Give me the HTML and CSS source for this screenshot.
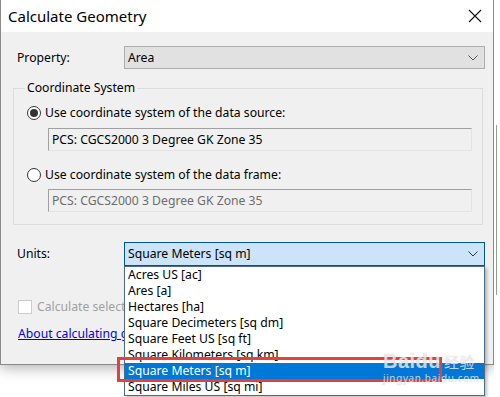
FILE: index.html
```html
<!DOCTYPE html>
<html lang="en">
<head>
  <meta charset="UTF-8">
  <title>Calculate Geometry</title>
  <link rel="stylesheet" href="styles.css">
</head>
<body>
  <div class="screen">
    <div class="dialog">
      <!-- barra de titulo -->
      <div class="titlebar">
        <span class="title">Calculate Geometry</span>
        <svg class="close" width="14" height="14" viewBox="0 0 14 14">
          <path d="M1 1 L13 13 M13 1 L1 13" stroke="#111" stroke-width="1.1" fill="none"/>
        </svg>
      </div>

      <div class="dialog-body">
        <div class="row prop-row">
          <label class="row-label">Property:</label>
          <div class="combo">
            <span>Area</span>
            <svg class="chevron" width="10" height="6" viewBox="0 0 10 6">
              <path d="M0.5 0.5 L5 5 L9.5 0.5" stroke="#555" stroke-width="1" fill="none"/>
            </svg>
          </div>
        </div>

        <fieldset class="group">
          <legend>Coordinate System</legend>
          <div class="radio-row">
            <span class="radio checked"></span>
            <span>Use coordinate system of the data source:</span>
          </div>
          <div class="textbox">PCS: CGCS2000 3 Degree GK Zone 35</div>
          <div class="radio-row second">
            <span class="radio"></span>
            <span>Use coordinate system of the data frame:</span>
          </div>
          <div class="textbox disabled">PCS: CGCS2000 3 Degree GK Zone 35</div>
        </fieldset>

        <div class="row units-row">
          <label class="row-label">Units:</label>
          <div class="combo-wrap">
            <div class="combo open">
              <span>Square Meters [sq m]</span>
              <svg class="chevron" width="10" height="6" viewBox="0 0 10 6">
                <path d="M0.5 0.5 L5 5 L9.5 0.5" stroke="#333" stroke-width="1" fill="none"/>
              </svg>
            </div>
            <ul class="dropdown">
              <li>Acres US [ac]</li>
              <li>Ares [a]</li>
              <li>Hectares [ha]</li>
              <li>Square Decimeters [sq dm]</li>
              <li>Square Feet US [sq ft]</li>
              <li>Square Kilometers [sq km]</li>
              <li class="selected">Square Meters [sq m]</li>
              <li>Square Miles US [sq mi]</li>
            </ul>
          </div>
        </div>

        <!-- quedan tapados por la lista desplegable -->
        <div class="check-row">
          <span class="checkbox"></span>
          <span class="muted">Calculate selected records only</span>
        </div>
        <div class="link-row"><a class="help-link" href="#">About calculating geometry</a></div>
      </div>
    </div>

    <div class="map-edge"><div class="map-line"></div></div>

    <!-- marca roja y marca de agua -->
    <div class="highlight"></div>
    <div class="watermark">
      <div class="wm-logo">Baidu<span class="wm-cn">经验</span></div>
      <div class="wm-url">jingyan.baidu.com</div>
    </div>
  </div>
</body>
</html>
```

FILE: styles.css
```css
body {
  margin: 0;
  background-color: #fff;
  font-family: "Noto Sans", "Open Sans", sans-serif;
  font-size: 12.2px;
  color: #000;
}

.screen {
  position: relative;
  width: 500px;
  height: 397px;
  overflow: hidden;
  display: flex;
  align-items: flex-start;
}

.dialog {
  width: 494px;
  height: 365px;
  flex-shrink: 0;
  background-color: #f0f0f0;
  border: 1px solid #8a8a8a;
  border-top: none;
  box-sizing: border-box;
  box-shadow: 0 2px 14px rgba(0, 0, 0, 0.35);
}

.titlebar {
  height: 32px;
  background-color: #fff;
  display: flex;
  align-items: center;
  justify-content: space-between;
  padding: 0 11px 0 7px;
}

.title {
  font-size: 15px;
  line-height: 20px;
}

.close {
  display: block;
  margin-top: -1px;
}

.dialog-body {
  padding: 14px 0 0 12px;
}

.row {
  display: flex;
  align-items: center;
}

.row-label {
  width: 107px;
  padding-left: 4px;
  line-height: 16px;
}

.combo {
  width: 361px;
  height: 23px;
  box-sizing: border-box;
  border: 1px solid #adadad;
  background-color: #e1e1e1;
  display: flex;
  align-items: center;
  justify-content: space-between;
  padding: 0 6px 0 3px;
  line-height: 16px;
}

.combo.open {
  height: 24px;
  border-color: #005499;
  background-color: #cce4f7;
}

.chevron {
  display: block;
}

.group {
  margin: 11px 0 0 0;
  width: 470px;
  box-sizing: border-box;
  border: 1px solid #dcdcdc;
  padding: 0 0 12px 13px;
}

.group legend {
  padding: 0 2px;
  margin-left: -2px;
  line-height: 16px;
}

.radio-row {
  display: flex;
  align-items: center;
  gap: 4px;
  margin-top: 9px;
  line-height: 16px;
}

.radio-row.second {
  margin-top: 16px;
}

.radio {
  width: 14px;
  height: 14px;
  box-sizing: border-box;
  border: 1px solid #333;
  border-radius: 50%;
  background-color: #fff;
  display: flex;
  align-items: center;
  justify-content: center;
}

.radio.checked::after {
  content: "";
  width: 8px;
  height: 8px;
  border-radius: 50%;
  background-color: #333;
}

.textbox {
  width: 424px;
  height: 23px;
  box-sizing: border-box;
  margin: 7px 0 0 21px;
  border: 1px solid #e3e3e3;
  border-top-color: #a0a0a0;
  border-left-color: #a0a0a0;
  background-color: #f0f0f0;
  padding: 0 3px;
  line-height: 21px;
}

.textbox.disabled {
  margin-top: 6px;
  color: #6d6d6d;
}

.units-row {
  margin-top: 17px;
}

.combo-wrap {
  position: relative;
}

.dropdown {
  position: absolute;
  top: 100%;
  left: 0;
  z-index: 2;
  width: 361px;
  box-sizing: border-box;
  margin: 0;
  padding: 0;
  list-style: none;
  background-color: #fff;
  border: 1px solid #4e6b86;
  box-shadow: 2px 2px 3px rgba(0, 0, 0, 0.25);
}

.dropdown li {
  height: 16px;
  line-height: 16px;
  padding-left: 3px;
}

.dropdown li.selected {
  background-color: #0078d7;
  color: #fff;
}

.check-row {
  display: flex;
  align-items: center;
  gap: 5px;
  margin: 33px 0 0 5px;
  width: 107px;
  overflow: hidden;
  line-height: 16px;
}

.checkbox {
  width: 14px;
  height: 14px;
  flex-shrink: 0;
  box-sizing: border-box;
  border: 1px solid #cccccc;
  background-color: #fff;
}

.muted {
  color: #a0a0a0;
  white-space: nowrap;
}

.link-row {
  margin: 11px 0 0 5px;
  width: 107px;
  overflow: hidden;
  line-height: 16px;
  white-space: nowrap;
}

.help-link {
  color: #0000ee;
}

.map-edge {
  flex: 1;
  height: 397px;
  background-color: #fff;
}

.map-line {
  width: 1px;
  height: 170px;
  margin: 125px 0 0 2px;
  background-color: #8aa889;
}

.highlight {
  position: absolute;
  left: 117px;
  top: 357px;
  width: 325px;
  height: 25px;
  box-sizing: border-box;
  border: 3px solid #e5403c;
  z-index: 3;
}

.watermark {
  position: absolute;
  left: 383px;
  top: 350px;
  z-index: 4;
  color: rgba(255, 255, 255, 0.7);
  text-shadow: 0 0 1px rgba(120, 120, 120, 0.5);
  pointer-events: none;
}

.wm-logo {
  font-family: "Liberation Sans", sans-serif;
  font-size: 20px;
  font-weight: bold;
  line-height: 22px;
  letter-spacing: 0.5px;
}

.wm-cn {
  font-family: "Noto Sans CJK SC", sans-serif;
  font-size: 15px;
  font-weight: normal;
  margin-left: 3px;
}

.wm-url {
  font-size: 10px;
  line-height: 11px;
  letter-spacing: 0.6px;
}
```
